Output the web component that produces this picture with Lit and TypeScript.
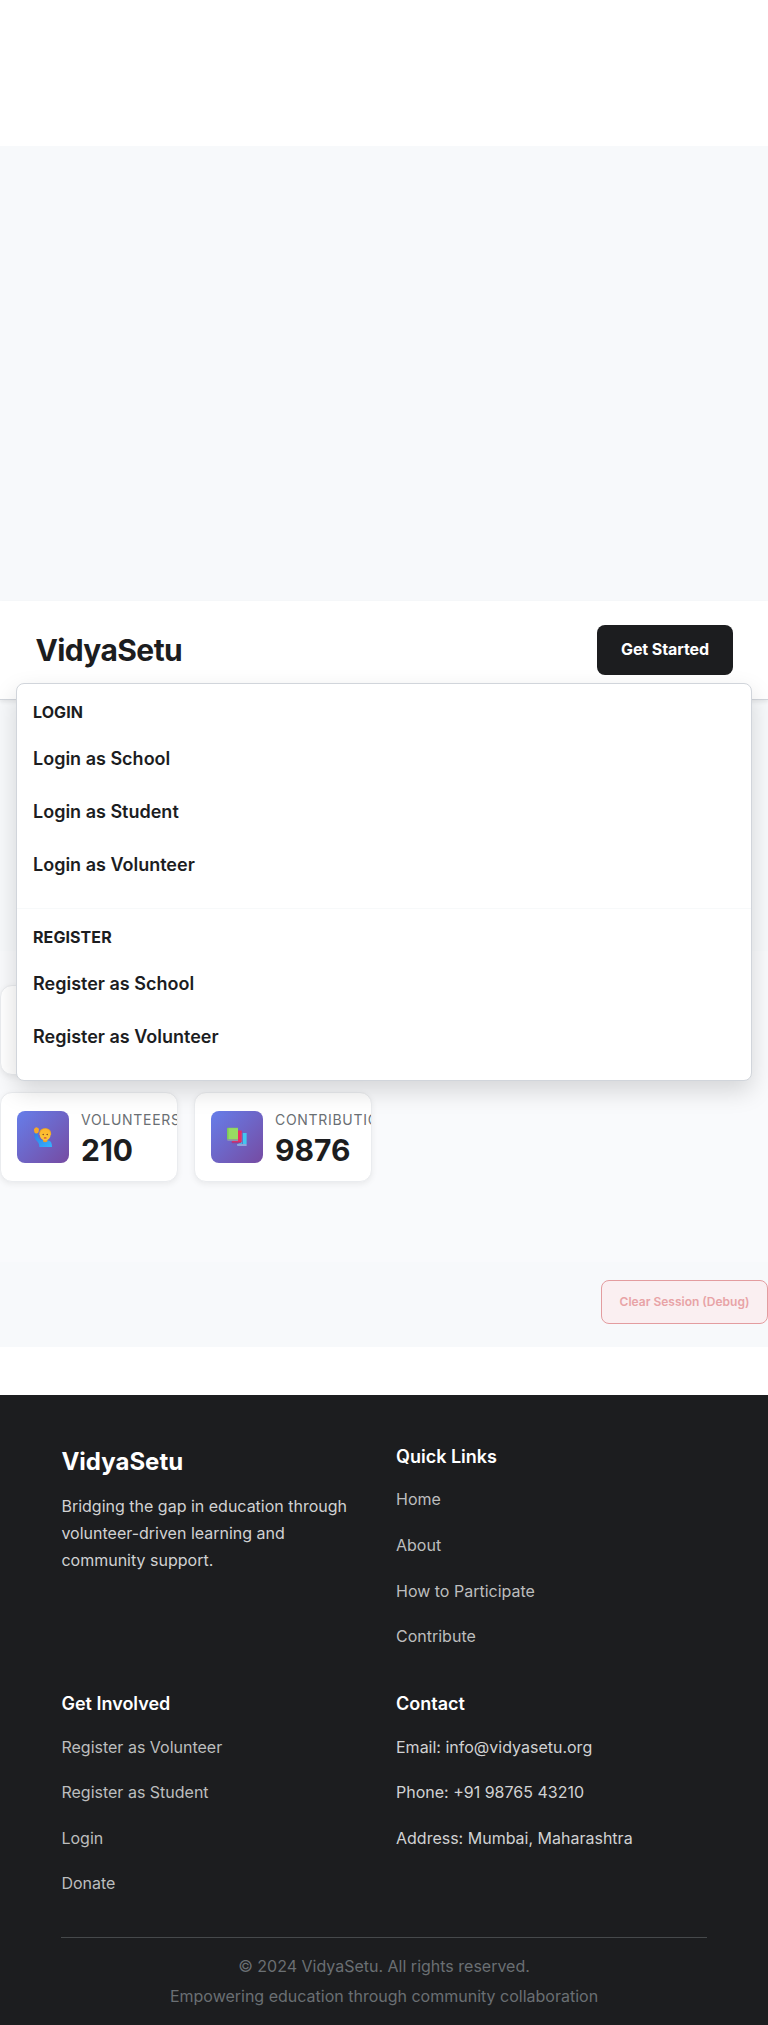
import { LitElement, html, css, svg } from "lit";
import { customElement } from "lit/decorators.js";

const volunteerIcon = svg`
  <svg viewBox="0 0 20 20" width="20" height="20">
    <defs>
      <linearGradient id="shirt" x1="0" y1="0" x2="1" y2="1">
        <stop offset="0" stop-color="#2f7fe6"></stop><stop offset="1" stop-color="#35b4ff"></stop>
      </linearGradient>
      <linearGradient id="face" x1="0" y1="0" x2="0" y2="1">
        <stop offset="0" stop-color="#ffb62c"></stop><stop offset="1" stop-color="#f9c838"></stop>
      </linearGradient>
    </defs>
    <path d="M1.200 6.200h3.400c.2 3.200 1.200 5.400 3.200 6.800l8 .4c2.200.6 3.200 2.600 3.200 6.600H6.400C6.400 17 5.200 15.400 3.600 13.800 1.800 12 1.100 9.600 1.200 6.200z" fill="url(#shirt)"></path>
    <path d="M1 2.600C1 1.200 2 1.600 2.400.8c.6-.8 1.600-.4 2.200 0 1.200.4 1.600 1.400 1.200 2.600-.2 1.600-.6 3-2.600 3.200C1.600 6.600 1 4.600 1 2.600z" fill="#f6a928"></path>
    <path d="M10 12h4.400v2.400c-1.400 1-3 1-4.400 0z" fill="#ef9e26"></path>
    <path d="M6.300 8C5.800 3.600 8.200 1.200 12.200 1.200S18.600 3.600 18.100 8z" fill="#eda526"></path>
    <ellipse cx="12.200" cy="7.700" rx="5.400" ry="5.900" fill="url(#face)"></ellipse>
    <circle cx="10.200" cy="7.600" r=".75" fill="#7c4326"></circle>
    <circle cx="14.200" cy="7.600" r=".75" fill="#7c4326"></circle>
    <ellipse cx="12.200" cy="10.900" rx="1.500" ry=".7" fill="#d83c3c"></ellipse>
  </svg>`;

const booksIcon = svg`
  <svg viewBox="0 0 20 20" width="20" height="20">
    <path d="M9.600 6h10v11h-8z" fill="#43c6f0"></path>
    <path d="M10 17h9.600v2H11c-.8 0-1-.6-1-2z" fill="#8ea6dc"></path>
    <path d="M14.800 4h1v13h-1z" fill="#6b63bd"></path>
    <path d="M5 3.400h9.800v11.200L13.600 16H5z" fill="#e92f63"></path>
    <path d="M4.600 14.800h9v1.400H5.400c-.8 0-1-.6-.8-1.400z" fill="#a33b88"></path>
    <path d="M0 1.600C0 1 .4.800 1 .8h10v11.800H1.400C.6 12.600 0 13 0 13.600z" fill="#7bc95c"></path>
    <path d="M1.600 1.200h9.400v11.200H1.600z" fill="#98dc62"></path>
    <path d="M.4 12.400H11v1.600H1.400c-.8 0-1.200-.6-1-1.600z" fill="#8b91b7"></path>
  </svg>`;

@customElement("app-root")
export class AppRoot extends LitElement {
  static styles = css`
    :host {
      display: block;
      background: #fff;
      color: #1c1d1f;
      font-family: Inter, "Liberation Sans", sans-serif;
      font-size: 16px;
      line-height: 1.6;
      overflow: hidden;
    }
    * { box-sizing: border-box; }
    h3, h4, p, ul { margin: 0; padding: 0; }
    ul { list-style: none; }
    .hero { margin-top: 146px; height: 455px; background: #f7f9fb; }
    .header {
      position: relative;
      z-index: 2;
      height: 99px;
      padding: 0 35px 0 35.4px;
      display: flex;
      align-items: center;
      justify-content: space-between;
      background: #fff;
      border-bottom: 1px solid #d1d5db;
      box-shadow: 0 2px 4px rgba(0, 0, 0, 0.08);
    }
    .brand { font-size: 30px; line-height: 48px; font-weight: 700; letter-spacing: -0.6px; }
    .start {
      width: 136px;
      height: 50px;
      border: 0;
      border-radius: 8px;
      background: #1c1d1f;
      color: #fff;
      font: 700 16px/1 Inter, sans-serif;
      letter-spacing: -0.1px;
      padding: 0 0 2px;
    }
    .menu {
      position: absolute;
      top: 82px;
      left: 16px;
      right: 16px;
      background: #fff;
      border: 1px solid #d1d5db;
      border-radius: 8px;
      box-shadow: 0 10px 25px rgba(0, 0, 0, 0.15);
    }
    .group { padding: 16px 0 16.4px; }
    .group + .group { border-top: 1px solid #f7f9fa; }
    .title { padding: 0 16px 7.6px; font-size: 16px; font-weight: 700; letter-spacing: 0.08px; text-transform: uppercase; }
    .item { padding: 12px 16px; font-size: 18px; font-weight: 600; }
    .band { height: 251px; background: #f7f9fb; }
    .stats {
      height: 311px;
      padding-top: 34px;
      background: #f9fafc;
      display: grid;
      grid-template-columns: 178px 178px;
      grid-auto-rows: 90px;
      gap: 17px 16px;
    }
    .card {
      display: flex;
      align-items: center;
      gap: 12px;
      padding: 0 16px;
      background: #fff;
      border: 1px solid #eaecef;
      border-radius: 12px;
      box-shadow: 0 2px 6px rgba(0, 0, 0, 0.07);
      overflow: hidden;
    }
    .icon {
      flex: none;
      width: 52px;
      height: 52px;
      border-radius: 8px;
      display: flex;
      align-items: center;
      justify-content: center;
      background: linear-gradient(135deg, #667eea, #764ba2);
    }
    .text { padding-top: 4px; }
    .label { font-size: 14px; line-height: 22px; letter-spacing: 0.7px; color: #6a6f73; text-transform: uppercase; white-space: nowrap; }
    .value { font-size: 30px; line-height: 38px; font-weight: 700; }
    .debug { height: 85px; padding-top: 18px; background: #f7f9fb; display: flex; justify-content: flex-end; align-items: flex-start; }
    .clear {
      width: 167px;
      height: 44px;
      padding: 0;
      border: 1px solid #e39c9f;
      border-radius: 8px;
      background: #faeff1;
      color: #e8a3a6;
      font: 600 12px/1 Inter, sans-serif;
    }
    .footer {
      margin-top: 48px;
      height: 630px;
      padding: 48px 8% 0;
      background: #1c1d1f;
      color: #d1d2d3;
    }
    .columns { display: grid; grid-template-columns: 1fr 1fr; column-gap: 24px; }
    .column { height: 247.2px; }
    .logo { font-size: 24px; line-height: 38px; font-weight: 700; color: #fff; margin-bottom: 12px; }
    .about { line-height: 27px; }
    .heading { font-size: 18px; line-height: 28px; font-weight: 600; color: #fff; margin-bottom: 16.4px; }
    .links { line-height: 25.6px; display: flex; flex-direction: column; gap: 20px; }
    .muted { color: #bcbdbe; }
    .legal { border-top: 1px solid #46494b; padding-top: 13px; text-align: center; color: #6a6f73; line-height: 30px; }
  `;

  private links(items: string[], cls = "") {
    return html`<ul class="links ${cls}">${items.map((t) => html`<li>${t}</li>`)}</ul>`;
  }

  private group(title: string, items: string[]) {
    return html`<div class="group">
      <div class="title">${title}</div>
      ${items.map((t) => html`<div class="item">${t}</div>`)}
    </div>`;
  }

  private card(icon: unknown, label: string, value: string) {
    return html`<div class="card">
      <div class="icon">${icon}</div>
      <div class="text"><div class="label">${label}</div><div class="value">${value}</div></div>
    </div>`;
  }

  render() {
    return html`
      <section class="hero"></section>
      <header class="header">
        <div class="brand">VidyaSetu</div>
        <button class="start">Get Started</button>
        <nav class="menu">
          ${this.group("Login", ["Login as School", "Login as Student", "Login as Volunteer"])}
          ${this.group("Register", ["Register as School", "Register as Volunteer"])}
        </nav>
      </header>
      <section class="band"></section>
      <section class="stats">
        <div class="card"></div>
        <div class="card"></div>
        ${this.card(volunteerIcon, "Volunteers", "210")}
        ${this.card(booksIcon, "Contributions", "9876")}
      </section>
      <section class="debug"><button class="clear">Clear Session (Debug)</button></section>
      <footer class="footer">
        <div class="columns">
          <div class="column">
            <h3 class="logo">VidyaSetu</h3>
            <p class="about">Bridging the gap in education through volunteer-driven learning and community support.</p>
          </div>
          <div class="column">
            <h4 class="heading">Quick Links</h4>
            ${this.links(["Home", "About", "How to Participate", "Contribute"], "muted")}
          </div>
          <div class="column">
            <h4 class="heading">Get Involved</h4>
            ${this.links(["Register as Volunteer", "Register as Student", "Login", "Donate"], "muted")}
          </div>
          <div class="column">
            <h4 class="heading">Contact</h4>
            ${this.links(["Email: info@vidyasetu.org", "Phone: +91 98765 43210", "Address: Mumbai, Maharashtra"])}
          </div>
        </div>
        <div class="legal">
          <p>© 2024 VidyaSetu. All rights reserved.</p>
          <p>Empowering education through community collaboration</p>
        </div>
      </footer>
    `;
  }
}
